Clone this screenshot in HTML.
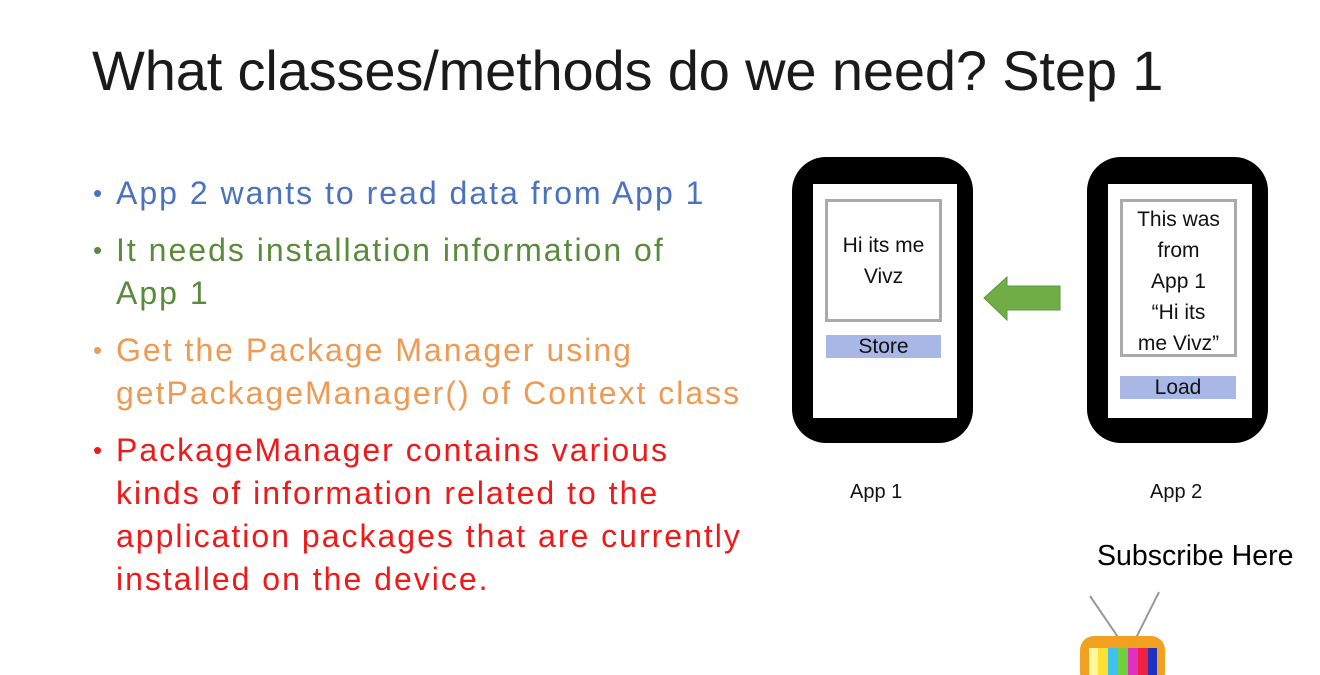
<!DOCTYPE html>
<html><head><style>
body{margin:0;width:1320px;height:675px;background:#fff;position:relative;overflow:hidden;font-family:"Liberation Sans",sans-serif}
.t{position:absolute;left:92px;top:38px;font-size:56px;color:#1a1a1a;white-space:nowrap;letter-spacing:-0.15px}
ul{position:absolute;left:93px;top:172px;margin:0;padding:0;list-style:none;font-size:32px;line-height:43px;white-space:nowrap;letter-spacing:2px}
li{position:relative;padding-left:23px;margin-bottom:14px}
li:before{content:"•";position:absolute;left:0;font-size:26px;letter-spacing:0}
.ph{position:absolute;width:181px;height:286px;background:#000;border-radius:34px;top:157px}
.sc{position:absolute;left:21px;top:27px;width:144px;height:234px;background:#fff}
.bx{position:absolute;border:3px solid #aaa;background:#fff;text-align:center;font-size:21px;line-height:31px;color:#111;white-space:nowrap}
.bt{position:absolute;background:#a9b7e6;text-align:center;font-size:21px;line-height:23px;color:#111}
.lb{position:absolute;top:481px;font-size:20px;color:#111}
</style></head><body>
<div class="t">What classes/methods do we need? Step 1</div>
<ul>
<li style="color:#4a72c0">App 2 wants to read data from App 1</li>
<li style="color:#5a8a3c">It needs installation information of<br>App 1</li>
<li style="color:#ee9a55">Get the Package Manager using<br>getPackageManager() of Context class</li>
<li style="color:#f01818">PackageManager contains various<br>kinds of information related to the<br>application packages that are currently<br>installed on the device.</li>
</ul>
<div class="ph" style="left:792px"><div class="sc">
<div class="bx" style="left:12px;top:15px;width:117px;height:123px;box-sizing:border-box;padding-top:28px">Hi its me<br>Vivz</div>
<div class="bt" style="left:13px;top:151px;width:115px">Store</div>
</div></div>
<div class="ph" style="left:1087px"><div class="sc">
<div class="bx" style="left:12px;top:15px;width:117px;height:158px;box-sizing:border-box;padding-top:2px">This was<br>from<br>App 1<br>“Hi its<br>me Vivz”</div>
<div class="bt" style="left:12px;top:192px;width:116px">Load</div>
</div></div>
<svg style="position:absolute;left:980px;top:274px" width="85" height="50"><polygon points="4,24 27,3 27,12 80,12 80,36 27,36 27,46" fill="#70ad47" stroke="#5a9a38"/></svg>
<div class="lb" style="left:850px">App 1</div>
<div class="lb" style="left:1150px">App 2</div>
<div style="position:absolute;left:1097px;top:540px;font-size:28.5px;color:#000">Subscribe Here</div>
<svg style="position:absolute;left:1075px;top:588px" width="100" height="87">
<line x1="15" y1="8" x2="45" y2="52" stroke="#999" stroke-width="2"/>
<line x1="84" y1="4" x2="60" y2="52" stroke="#999" stroke-width="2"/>
<rect x="5" y="48" width="85" height="50" rx="14" fill="#f2a020"/>
<g transform="translate(14,60)">
<rect x="0" y="0" width="9" height="30" fill="#fff7a0"/><rect x="9" width="10" height="30" fill="#ffe030"/><rect x="19" width="10" height="30" fill="#40c0f0"/><rect x="29" width="10" height="30" fill="#70d040"/><rect x="39" width="10" height="30" fill="#e030c0"/><rect x="49" width="10" height="30" fill="#f02040"/><rect x="59" width="9" height="30" fill="#2030c0"/></g>
</svg>
</body></html>
